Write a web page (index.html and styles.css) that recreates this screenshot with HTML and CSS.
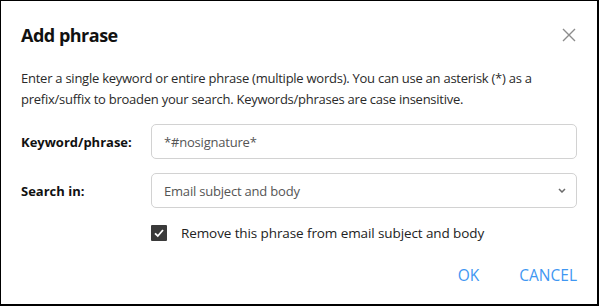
FILE: index.html
```html
<!DOCTYPE html>
<html lang="en">
<head>
<meta charset="utf-8">
<title>Add phrase</title>
<link rel="stylesheet" href="styles.css">
</head>
<body>
<div class="dialog">
  <div class="header">
    <h1 class="title">Add phrase</h1>
    <button class="close" aria-label="Close">
      <svg width="14" height="14" viewBox="0 0 14 14"><path d="M1 1 L13 13 M13 1 L1 13" stroke="#8c8c8c" stroke-width="1.4" fill="none"/></svg>
    </button>
  </div>
  <p class="desc">Enter a single keyword or entire phrase (multiple words). You can use an asterisk (*) as a<br>prefix/suffix to broaden your search. Keywords/phrases are case insensitive.</p>
  <div class="form">
    <label class="label">Keyword/phrase:</label>
    <div class="field">*#nosignature*</div>
    <label class="label">Search in:</label>
    <div class="field select">
      <span>Email subject and body</span>
      <svg class="chev" width="8" height="5" viewBox="0 0 8 5"><path d="M1 1 L4 4 L7 1" stroke="#6b6b6b" stroke-width="1.5" fill="none"/></svg>
    </div>
    <div></div>
    <div class="check-row">
      <span class="checkbox">
        <svg width="16" height="16" viewBox="0 0 16 16"><path d="M4 8.3 L6.8 11 L12 5" stroke="#fff" stroke-width="1.8" fill="none"/></svg>
      </span>
      <span class="check-label">Remove this phrase from email subject and body</span>
    </div>
  </div>
  <div class="actions">
    <button class="btn">OK</button>
    <button class="btn">CANCEL</button>
  </div>
</div>
</body>
</html>
```
FILE: styles.css
```css
* { box-sizing: border-box; }
html, body { margin: 0; padding: 0; background: #fff; }
.dialog {
  width: 599px;
  height: 306px;
  border: 1px solid #000;
  border-right-width: 2px;
  border-bottom-width: 2px;
  padding: 0 20px 0 20px;
  font-family: "Open Sans", "Noto Sans", sans-serif;
  color: #333;
  background: #fff;
}
.header {
  display: flex;
  justify-content: space-between;
  align-items: center;
  padding-top: 21px;
  height: 46px;
}
.title {
  margin: 0;
  font-size: 18px;
  line-height: 24px;
  font-weight: 700;
  color: #111;
  letter-spacing: -0.5px;
}
.close {
  border: 0;
  background: none;
  padding: 0;
  width: 14px;
  height: 14px;
  display: flex;
  margin-right: 1px;
}
.desc {
  margin: 21px 0 0 0;
  font-size: 13px;
  line-height: 20.5px;
  color: #2a2a2a;
  letter-spacing: -0.25px;
}
.form {
  margin-top: 15px;
  display: grid;
  grid-template-columns: 130px 1fr;
  row-gap: 14px;
  align-items: center;
}
.label {
  font-size: 13px;
  font-weight: 700;
  color: #111;
  letter-spacing: 0;
}
.field {
  height: 35px;
  border: 1px solid #d2d2d2;
  border-radius: 5px;
  padding: 0 12px;
  display: flex;
  align-items: center;
  font-size: 13px;
  color: #555;
  letter-spacing: -0.2px;
}
.select {
  justify-content: space-between;
}
.chev { margin-right: -2px; }
.check-row {
  display: flex;
  align-items: center;
  gap: 14px;
  height: 16px;
  margin-top: 3px;
}
.checkbox {
  width: 16px;
  height: 16px;
  background: #3a3a3a;
  border-radius: 1px;
  display: flex;
}
.check-label {
  font-size: 13.5px;
  color: #222;
  letter-spacing: -0.1px;
}
.actions {
  display: flex;
  justify-content: flex-end;
  gap: 40px;
  margin-top: 24px;
}
.btn {
  border: 0;
  background: none;
  padding: 0;
  font-family: inherit;
  font-size: 15.5px;
  line-height: 20px;
  color: #3f97f2;
  letter-spacing: 0;
}
```
